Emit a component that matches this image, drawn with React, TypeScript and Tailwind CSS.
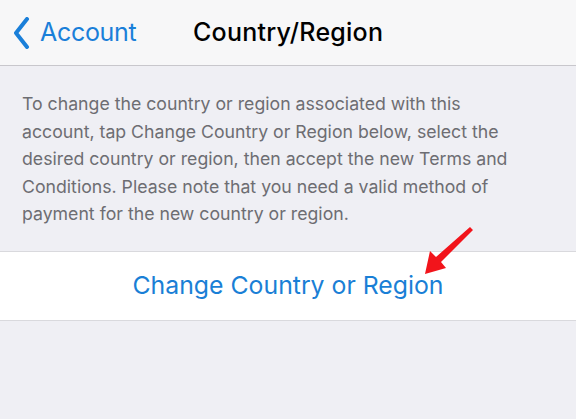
import React from "react";

export default function App() {
  return (
    <div
      className="relative w-[576px] h-[419px] overflow-hidden bg-[#efeff4]"
      style={{ fontFamily: "Inter, Roboto, 'Noto Sans', sans-serif" }}
    >
      {/* nav bar */}
      <div className="relative flex items-center h-[66px] bg-[#f7f7f8] border-b border-[#c8c7cc]">
        <div className="flex items-center pl-[13px] text-[#1a7fd9]">
          <svg width="17" height="32" viewBox="0 0 17 32" className="mt-[1px]">
            <path
              d="M14 2 L3 16 L14 30"
              fill="none"
              stroke="#1a7fd9"
              strokeWidth="4"
              strokeLinecap="round"
              strokeLinejoin="round"
            />
          </svg>
          <span className="ml-[10px] text-[25px] leading-none tracking-[-0.3px]">Account</span>
        </div>
        <div className="absolute left-[193px] top-0 h-full flex items-center text-[25px] font-medium text-black tracking-[0.25px]">
          Country/Region
        </div>
      </div>

      {/* description */}
      <p className="pl-[22px] pr-[20px] pt-[24px] text-[17.7px] leading-[27.5px] text-[#6d6d72]">
        To change the country or region associated with this
        <br />
        account, tap Change Country or Region below, select the
        <br />
        desired country or region, then accept the new Terms and
        <br />
        Conditions. Please note that you need a valid method of
        <br />
        payment for the new country or region.
      </p>

      {/* cell */}
      <div className="mt-[23px] h-[70px] flex items-center justify-center bg-white border-y border-[#d9d9dd]">
        <span className="text-[24.8px] text-[#1a7fd6] tracking-[0px]">Change Country or Region</span>
      </div>

      {/* red arrow annotation */}
      <svg
        className="absolute left-0 top-0 pointer-events-none"
        width="576"
        height="419"
        viewBox="0 0 576 419"
      >
        <path
          d="M425 274 L430 251 L436 257 L470 227 L473 230 L441 262 L446 268 Z"
          fill="#f2141b"
        />
      </svg>
    </div>
  );
}
